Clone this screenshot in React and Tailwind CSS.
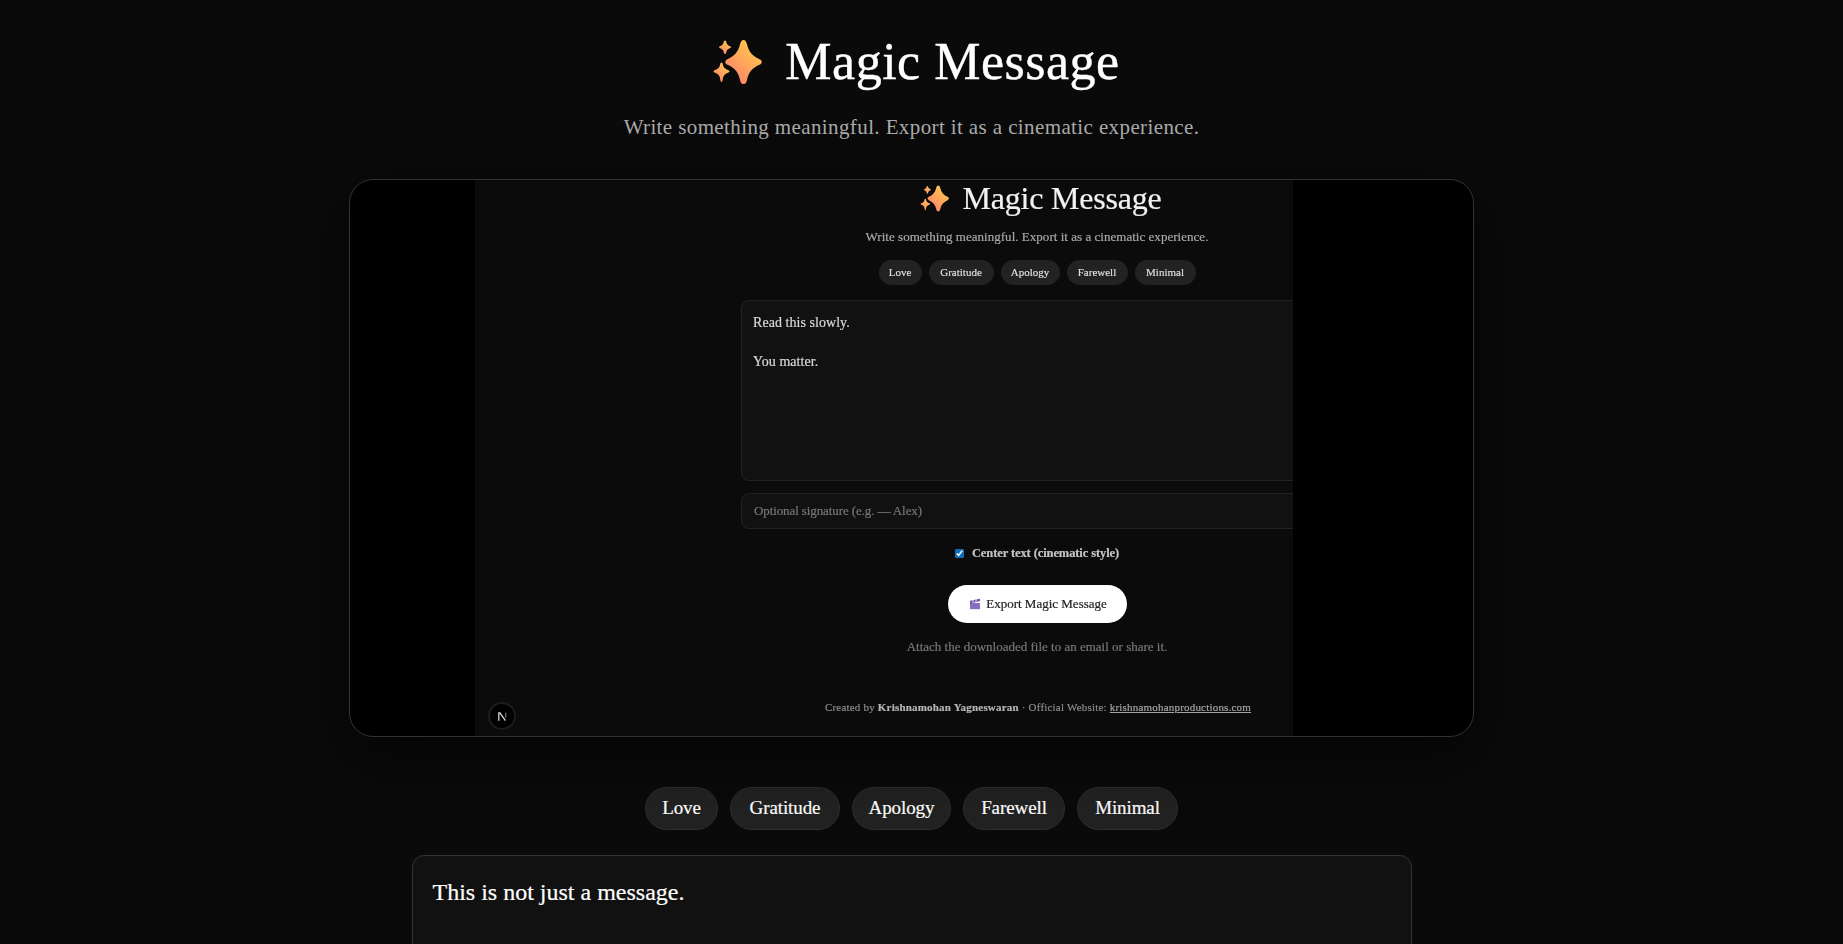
const PRESETS = [
  { label: 'Love', w: 'w-[73px]', sw: 'w-[43px]' },
  { label: 'Gratitude', w: 'w-[110px]', sw: 'w-[65px]' },
  { label: 'Apology', w: 'w-[99px]', sw: 'w-[59px]' },
  { label: 'Farewell', w: 'w-[102px]', sw: 'w-[61px]' },
  { label: 'Minimal', w: 'w-[101px]', sw: 'w-[61px]' },
]

function Sparkles({ className }) {
  return (
    <svg viewBox="0 0 50 46" className={className}>
      <defs>
        <linearGradient id="spark" x1="0.85" y1="0" x2="0.1" y2="1">
          <stop offset="0" stopColor="#ffcf4a" />
          <stop offset="1" stopColor="#ff7a6e" />
        </linearGradient>
      </defs>
      <g fill="url(#spark)">
        <path d="M30.500 1C32.500 1 33.500 3 34.200 6C35.800 13 40 17.500 46.500 20.200C49.500 21.500 49.500 24.500 46.500 25.800C40 28.500 35.800 33 34.200 40C33.500 44 32.500 45 30.500 45C28.500 45 27.500 44 26.800 40C25.200 33 21 28.500 14.500 25.800C11.500 24.500 11.500 21.500 14.500 20.200C21 17.500 25.200 13 26.800 6C27.500 3 28.500 1 30.500 1Z" />
        <path d="M12 1.500C12.800 1.500 13.200 2.300 13.400 3.500C13.800 5.300 15 6.600 17.300 7.300C18.300 7.700 18.300 8.700 17.300 9C15 9.800 13.800 11 13.400 12.800C13.200 14.200 12.800 15 12 15C11.200 15 10.800 14.200 10.600 12.800C10.200 11 9 9.800 6.700 9C5.700 8.700 5.700 7.700 6.700 7.300C9 6.600 10.200 5.300 10.600 3.500C10.800 2.300 11.200 1.500 12 1.500Z" />
        <path d="M8.500 23.500C9.300 23.500 9.800 24.500 10 26C10.500 28.500 12 30 15.500 31.300C16.800 31.800 16.800 33 15.500 33.500C12 34.700 10.500 36.500 10 39C9.800 41 9.300 43 8.500 43C7.700 43 7.200 41 7 39C6.500 36.500 5 34.700 1.500 33.500C0.200 33 0.200 31.800 1.500 31.300C5 30 6.500 28.500 7 26C7.200 24.500 7.700 23.500 8.500 23.500Z" />
      </g>
    </svg>
  )
}

function Clapper({ className }) {
  return (
    <svg viewBox="0 0 12 12" className={className}>
      <path d="M1 5h10v6.200H1z" fill="#8a6fc0" />
      <path d="M1 5.500V2.800l9.800-2 .5 2.200L1.500 5.500z" fill="#6f56a8" />
      <path d="M3 4.700l.5-2.500 1.200-.3-.5 2.600zM6.200 4l.5-2.600 1.300-.3-.6 2.700z" fill="#d9cdf0" />
    </svg>
  )
}

function InnerScreen() {
  return (
    <div className="relative flex h-full w-[818px] shrink-0 flex-col overflow-hidden bg-[#0b0b0b] pl-[266px] text-center blur-[0.35px] [-webkit-text-stroke:0.2px]">
      <div className="flex w-[592px] flex-col items-center">
        <h2 className="-mt-[2px] ml-[8px] flex h-[40px] items-center gap-[12px] text-[32px] leading-[40px] tracking-[-0.2px] text-[#f2f2f2]">
          <Sparkles className="h-[27px] w-[30px]" />
          Magic Message
        </h2>
        <p className="mt-[10px] text-[13px] leading-[18px] tracking-[0.03px] text-[#a8a8a8]">
          Write something meaningful. Export it as a cinematic experience.
        </p>
        <div className="mt-[14px] flex gap-[7px]">
          {PRESETS.map((p) => (
            <span key={p.label} className={`flex h-[25px] items-center justify-center rounded-full bg-[#222222] text-[11px] text-[#dedede] ${p.sw}`}>
              {p.label}
            </span>
          ))}
        </div>
        <div className="mt-[15px] h-[181px] w-full rounded-[8px] border border-[#222222] bg-[#111111] px-[11px] py-[12px] text-left text-[14px] leading-[19.500px] tracking-[0.05px] text-[#d8d8d8] whitespace-pre-line">
          {'Read this slowly.\n\nYou matter.'}
        </div>
        <div className="mt-[12px] flex h-[36px] w-full items-center rounded-[8px] border border-[#222222] bg-[#111111] px-[12px] text-left text-[13px] tracking-[-0.1px] text-[#777777]">
          Optional signature (e.g. — Alex)
        </div>
        <label className="mt-[15px] flex h-[18px] items-center gap-[8px] text-[12.500px] font-bold tracking-[-0.1px] text-[#c4c4c4]">
          <input type="checkbox" checked readOnly className="h-[9px] w-[9px] accent-[#0f6cbd]" />
          Center text (cinematic style)
        </label>
        <button className="mt-[23px] flex h-[38px] w-[179px] items-center justify-center gap-[5px] rounded-full bg-white pl-[2px] text-[13px] text-[#222222]">
          <Clapper className="h-[12px] w-[12px]" />
          Export Magic Message
        </button>
        <p className="mt-[15px] text-[13px] leading-[18px] text-[#777777]">
          Attach the downloaded file to an email or share it.
        </p>
        <p className="mt-[43px] ml-[2px] text-[11px] leading-[16px] tracking-[0.2px] text-[#8a8a8a]">
          Created by <strong className="font-bold text-[#b5b5b5]">Krishnamohan Yagneswaran</strong> · Official Website: <span className="text-[#a5a5a5] underline">krishnamohanproductions.com</span>
        </p>
      </div>
    </div>
  )
}

export default function App() {
  return (
    <div className="h-[944px] w-full overflow-hidden bg-[#0a0a0a] font-['Liberation_Serif',Georgia,serif] text-white">
      <main className="flex w-[1823px] flex-col items-center">
        <h1 className="mt-[32px] ml-[10px] flex h-[60px] items-center gap-[22px] text-[52px] leading-[60px] tracking-[0.5px] [-webkit-text-stroke:0.4px]">
          <Sparkles className="h-[46px] w-[50px]" />
          Magic Message
        </h1>
        <p className="mt-[21px] text-[21px] leading-[28px] tracking-[0.39px] text-[#aaaaaa]">
          Write something meaningful. Export it as a cinematic experience.
        </p>

        <div className="relative mt-[38px] flex h-[558px] w-[1125px] justify-start overflow-hidden rounded-[24px] border border-[#333333] bg-black pl-[125px] shadow-[0_20px_60px_rgba(0,0,0,0.6)]">
          <InnerScreen />
          <span className="absolute bottom-[6px] left-[138px] flex h-[28px] w-[28px] items-center justify-center rounded-full border-2 border-[#1c1c1c] bg-black">
            <svg viewBox="0 0 12 12" className="h-[11px] w-[11px]">
              <path d="M2 10.500V2h1.200l6 8.500" fill="none" stroke="#e6e6e6" strokeWidth="1.300" />
              <path d="M9.500 2v5" stroke="#888888" strokeWidth="1.200" />
            </svg>
          </span>
        </div>

        <div className="mt-[50px] flex gap-[12px]">
          {PRESETS.map((p) => (
            <button key={p.label} className={`flex h-[43px] items-center justify-center rounded-full border border-[#2e2e2e] bg-[#222222] text-[19px] tracking-[-0.1px] text-white [-webkit-text-stroke:0.2px] ${p.w}`}>
              {p.label}
            </button>
          ))}
        </div>

        <div className="mt-[25px] h-[200px] w-[1000px] rounded-[12px] border border-[#333333] bg-[#111111] px-[20px] pt-[20px] text-[24px] leading-[32px] text-white [-webkit-text-stroke:0.2px]">
          This is not just a message.
        </div>
      </main>
    </div>
  )
}
